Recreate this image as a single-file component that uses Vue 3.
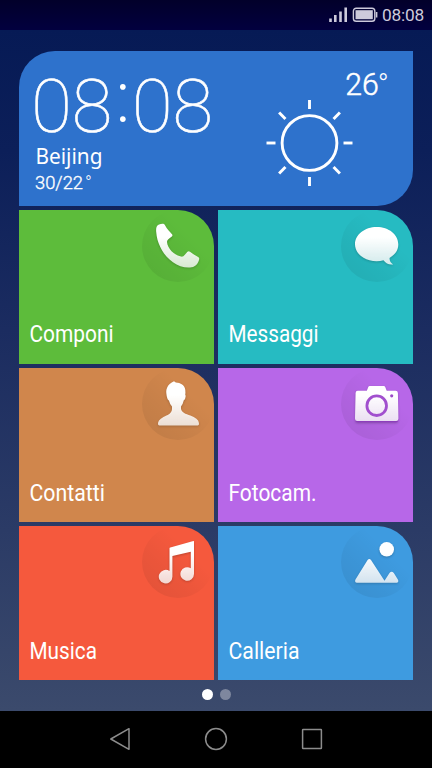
<script setup>
const tiles = [
  { name: 'phone', label: 'Componi', x: 10.5, width: 84, base: 132, color: '#5dbc3b' },
  { name: 'chat', label: 'Messaggi', x: 10.5, width: 90, base: 132, color: '#26bbc2' },
  { name: 'contact', label: 'Contatti', x: 10.5, width: 75.5, base: 133, color: '#d0864c' },
  { name: 'camera', label: 'Fotocam.', x: 10.5, width: 88, base: 133, color: '#b767e8' },
  { name: 'music', label: 'Musica', x: 10.5, width: 67.5, base: 133, color: '#f5593d' },
  { name: 'gallery', label: 'Calleria', x: 10.5, width: 71, base: 133, color: '#3e9be0' },
]
const rays = [0, 45, 90, 135, 180, 225, 270, 315]
</script>

<template>
  <div class="phone">
    <header class="status">
      <svg class="signal" width="50" height="16" viewBox="0 0 50 16">
        <path d="M1.5 11.5v3.5M6.3 8v7M11.5 4.4v10.6M16.7 .5v14.5" stroke="#cdcadb" stroke-width="2.6" />
        <rect x="24.4" y="1.2" width="21.4" height="13" rx="2.8" fill="none" stroke="#cdcadb" stroke-width="1.4" />
        <rect x="26.5" y="3.2" width="17.3" height="9" fill="#cdcadb" />
        <path d="M46.8 5h1.6v5.5h-1.6z" fill="#cdcadb" />
      </svg>
      <span class="time">08:08</span>
    </header>

    <main class="home">
      <section class="weather">
        <svg width="394" height="155" viewBox="0 0 394 155" fill="#fff">
          <g class="clock">
            <text x="12.2" y="81" textLength="81" lengthAdjust="spacingAndGlyphs">08</text>
            <text class="colon" x="93.7" y="71.3">:</text>
            <text x="113" y="81" textLength="81" lengthAdjust="spacingAndGlyphs">08</text>
          </g>
          <text class="city" x="16.5" y="113" textLength="67" lengthAdjust="spacingAndGlyphs">Beijing</text>
          <text class="range" x="16" y="138" textLength="48" lengthAdjust="spacingAndGlyphs">30/22</text>
          <text class="range degree" x="66" y="138">°</text>
          <text class="now" x="326.3" y="43.5" textLength="33.5" lengthAdjust="spacingAndGlyphs">26</text>
          <text class="now deg" x="358.8" y="43">°</text>
          <g transform="translate(290.5 92)" fill="none" stroke="#fff" stroke-width="2.9">
            <circle r="27.4" />
            <path v-for="a in rays" :key="a" d="M34 0h9" :transform="`rotate(${a})`" />
          </g>
        </svg>
      </section>

      <section class="grid">
        <article v-for="t in tiles" :key="t.name" class="tile" :style="{ background: t.color }">
          <div class="disc">
            <svg class="icon" width="72" height="72" viewBox="0 0 72 72">
              <defs>
                <linearGradient :id="'fill-' + t.name" gradientUnits="userSpaceOnUse" x1="0" y1="14" x2="0" y2="58">
                  <stop offset="0" stop-color="#fff" />
                  <stop offset=".3" stop-color="#fff" />
                  <stop offset="1" stop-color="#fff" stop-opacity=".78" />
                </linearGradient>
              </defs>
              <g :fill="`url(#fill-${t.name})`">
                <path v-if="t.name === 'phone'" d="M14.2 22C13.8 18 14.5 15.7 17 14.6C19.7 13.5 22 13.3 23 15.2C25 19 27.8 21.5 30 24.2Q31 25.3 29.8 26.5C27 29 25 29.5 25 32C25.5 38.5 32 45 39 46.6C42 47.2 43.5 43.5 45.5 41.7Q46.6 40.7 48 41.7C50.5 43.8 54 45.7 56.5 47.3Q57.7 48.2 57 50C55.5 55 52.5 57.2 48 57.5C31 58.5 15.5 41 14.2 22Z" />
                <path v-else-if="t.name === 'chat'" d="M35.7 17C47.8 17 57.3 24.5 57.3 34.2C57.3 40.2 54 44.8 48.5 47.9C48.5 51.3 50 53 52.2 54.4C48.5 55.2 44.8 53.5 42.5 50.3Q39.2 51.2 35.7 51.2C23.7 51.2 14 43.7 14 34.2S23.7 17 35.7 17Z" />
                <path v-else-if="t.name === 'contact'" d="M32 13.3L33.8 14.6C38.5 14.8 42.9 17.3 43.3 22Q43.6 24.8 43.2 26.5Q44.2 27.3 43.2 30.5Q42.6 32 41.8 32.3Q41 36 39 38.6V41C40 45.5 46 46.5 50 48.2C55 50.4 57 52.5 57 56Q57 57.4 55.7 57.4H17.3Q16 57.4 16 56C16 52.5 18.5 50.4 23 48.2C27 46.5 29.7 45 30 41V38.6Q27.8 36 26.9 32.5Q25.5 32 24.7 28Q23.6 22.6 25 20C26 17 28.8 14.8 32 13.3Z" />
                <template v-else-if="t.name === 'camera'">
                  <path class="shade" d="M14.3 52H57.2Q57.2 54.3 55.2 54.3H16.2Q14.3 54.3 14.3 52Z" />
                  <path d="M16.8 22.8H25.8L27.3 19Q27.7 18 28.7 18H42.8Q43.8 18 44.2 19L45.7 22.8H54.6Q56.7 22.8 56.9 25L57.4 50.5Q57.4 53 55.2 53H16.2Q14 53 14 50.5L14.6 25Q14.7 22.8 16.8 22.8Z" />
                  <circle cx="35.7" cy="37.7" r="9.8" fill="none" stroke="#a14fce" stroke-width="2.8" />
                  <circle cx="50.7" cy="27.8" r="1.6" fill="#9c4ac8" />
                </template>
                <path v-else-if="t.name === 'music'" d="M27.5 22.3Q27.5 21.6 28.3 21.4L51.4 15.1Q52 15 52 15.6V48A6.8 6.8 0 1 1 48.8 42.2V25.8L30.4 30V50.7A6.8 6.8 0 1 1 27.5 45.1Z" />
                <template v-else>
                  <circle cx="45.7" cy="23.3" r="7.3" />
                  <path d="M26.6 34Q28.3 32.2 30 34L43.5 54.8L48.5 47Q50.6 44.6 52.8 47L57 53.8Q58 56.6 55.8 56.8H15.7Q13.3 56.3 14.5 53.6Z" />
                </template>
              </g>
            </svg>
          </div>
          <svg class="label" width="195" height="154" viewBox="0 0 195 154">
            <text :x="t.x" :y="t.base" :textLength="t.width" lengthAdjust="spacingAndGlyphs">{{ t.label }}</text>
          </svg>
        </article>
      </section>

      <div class="pager"><i class="dot on"></i><i class="dot"></i></div>
    </main>

    <nav class="nav">
      <svg width="24" height="24" viewBox="0 0 24 24"><path d="M21 1.7V22.3L2.8 12Z" /></svg>
      <svg width="24" height="24" viewBox="0 0 24 24"><circle cx="12" cy="12" r="10.4" /></svg>
      <svg width="24" height="24" viewBox="0 0 24 24"><rect x="2.6" y="2.6" width="18.8" height="18.8" rx=".5" /></svg>
    </nav>
  </div>
</template>

<style>
body { margin: 0; }
</style>

<style scoped>
.phone {
  width: 432px;
  height: 768px;
  display: flex;
  flex-direction: column;
  overflow: hidden;
  font-family: Roboto, sans-serif;
  background: linear-gradient(#061a55 30px, #0c1f59 150px, #1b2c60 330px, #2b3b66 530px, #3b4a6c 710px);
}
svg { display: block; }
.status {
  height: 30px;
  flex: none;
  display: flex;
  align-items: center;
  justify-content: flex-end;
  gap: 3px;
  padding-right: 8px;
  box-sizing: border-box;
  background: linear-gradient(#02002a, #02003f);
}
.time { color: #cdcadb; font-size: 17.3px; line-height: 30px; letter-spacing: -0.2px; }
.home { flex: none; height: 681px; padding: 21px 19px 0; box-sizing: border-box; }
.weather {
  width: 394px;
  height: 155px;
  border-radius: 36px 0 36px 0;
  background: #2e72cc;
}
.clock { font-size: 74.5px; font-weight: 100; stroke: #fff; stroke-width: 0.6px; }
.colon { font-family: Inter, sans-serif; font-size: 73px; font-weight: 200; stroke: none; }
.city { font-family: "Noto Sans", sans-serif; font-size: 22px; }
.range { font-size: 18px; font-weight: 300; stroke: #fff; stroke-width: 0.35px; }
.degree { stroke: none; }
.now { font-size: 30.5px; font-weight: 300; stroke: #fff; stroke-width: 0.5px; }
.deg { font-size: 29px; stroke: none; }
.grid {
  display: grid;
  grid-template-columns: 195px 195px;
  grid-auto-rows: 154px;
  gap: 4px;
  margin-top: 4px;
}
.tile { display: grid; border-radius: 0 36px 0 0; overflow: hidden; }
.disc {
  grid-area: 1 / 1;
  justify-self: end;
  width: 72px;
  height: 72px;
  border-radius: 50%;
  background: linear-gradient(45deg, rgba(0, 0, 0, 0.07) 10%, rgba(0, 0, 0, 0.045) 35%, transparent 66%);
}
.icon { filter: drop-shadow(0 1px 1px rgba(0, 0, 0, 0.22)); }
.shade { fill: #8d3dbb; }
.label { grid-area: 1 / 1; fill: #fff; font-size: 24.8px; }
.pager { display: flex; justify-content: center; gap: 7px; padding-top: 9px; }
.dot { width: 11px; height: 11px; border-radius: 50%; background: #7e879e; }
.on { background: #fff; }
.nav {
  flex: 1;
  display: flex;
  justify-content: center;
  align-items: center;
  gap: 72px;
  padding-bottom: 1px;
  background: #000;
}
.nav svg { fill: none; stroke: #8c8c8c; stroke-width: 1.5; stroke-linejoin: round; }
</style>
